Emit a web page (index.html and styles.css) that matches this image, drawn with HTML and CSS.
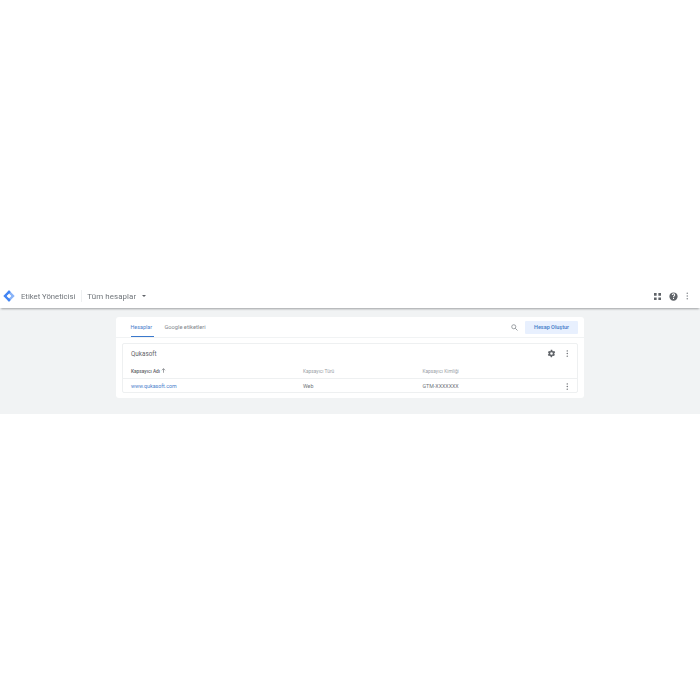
FILE: index.html
```html
<!DOCTYPE html>
<html lang="tr">
<head>
<meta charset="utf-8">
<title>Etiket Yöneticisi</title>
<link rel="stylesheet" href="styles.css">
</head>
<body>
<div class="page">
  <header class="topbar">
    <svg class="logo" viewBox="0 0 24 24" width="12" height="12"><path fill="#8ab4f8" d="M12 .6 23.4 12 12 23.4 8.6 20l8-8-8-8z"/><path fill="#4285f4" d="M12 .6 .6 12 12 23.4 15.4 20l-8-8 8-8z"/><circle cx="12" cy="12" r="3.2" fill="#fff"/></svg>
    <span class="product">Etiket Yöneticisi</span>
    <span class="divider"></span>
    <span class="crumb">Tüm hesaplar</span>
    <span class="caret"></span>
    <span class="spring"></span>
    <svg class="apps" viewBox="0 0 8 8" width="7" height="7"><path fill="#5f6368" d="M0 0h3v3H0zM5 0h3v3H5zM0 5h3v3H0zM5 5h3v3H5z"/></svg>
    <svg class="help" viewBox="0 0 24 24" width="9" height="9"><path fill="#5f6368" fill-rule="evenodd" d="M12 1a11 11 0 1 0 0 22 11 11 0 0 0 0-22zm-1.400 17.500v-2.800h2.800v2.800zm4.600-7.600c-.9.900-1.800 1.400-1.800 3.100h-2.800c0-2.600 1.300-3.300 2.300-4.300.6-.6.900-1.100.9-1.700a1.800 1.800 0 0 0-3.600 0H7.400a4.600 4.600 0 0 1 9.200 0c0 1.200-.6 2.100-1.400 2.900z"/></svg>
    <svg class="more" viewBox="0 0 4 12" width="2.500" height="8"><circle cx="2" cy="1.500" r="1.200" fill="#80868b"/><circle cx="2" cy="6" r="1.200" fill="#80868b"/><circle cx="2" cy="10.500" r="1.200" fill="#80868b"/></svg>
  </header>
  <main class="content">
    <section class="panel">
      <div class="tabs">
        <div class="tab tab-active">Hesaplar</div>
        <div class="tab">Google etiketleri</div>
        <span class="spring"></span>
        <svg class="search" viewBox="0 0 24 24" width="7" height="7"><circle cx="9.500" cy="9.500" r="7" fill="none" stroke="#80868b" stroke-width="2.600"/><path d="m14.800 14.800 7.400 7.400" stroke="#80868b" stroke-width="2.800"/></svg>
        <div class="cta">Hesap Oluştur</div>
      </div>
      <div class="account">
        <div class="account-head">
          <span class="account-name">Qukasoft</span>
          <span class="spring"></span>
          <svg class="gear" viewBox="0 0 24 24" width="9" height="9"><path fill="#5f6368" fill-rule="evenodd" d="M19.400 13c.1-.3.100-.7.100-1s0-.7-.1-1l2.100-1.600c.2-.2.200-.4.100-.6l-2-3.500c-.1-.2-.4-.3-.6-.2l-2.500 1c-.5-.4-1.100-.7-1.700-1L14 2.400c0-.2-.2-.4-.5-.4h-3c-.3 0-.5.200-.5.400l-.4 2.700c-.6.200-1.200.6-1.700 1l-2.500-1c-.2-.1-.5 0-.6.200l-2 3.500c-.1.200-.1.400.1.600L4.600 11c-.1.300-.1.700-.1 1s0 .7.100 1l-2.100 1.600c-.2.200-.2.400-.1.600l2 3.500c.1.200.4.300.6.200l2.500-1c.5.400 1.100.7 1.700 1l.4 2.700c0 .2.200.4.500.4h3c.3 0 .5-.2.500-.4l.4-2.700c.6-.2 1.200-.6 1.700-1l2.500 1c.2.100.5 0 .6-.2l2-3.500c.1-.2.100-.4-.1-.6zM12 15.500a3.500 3.500 0 1 1 0-7 3.500 3.500 0 0 1 0 7z"/></svg>
          <svg class="more row-more" viewBox="0 0 4 12" width="2.500" height="7"><circle cx="2" cy="1.500" r="1.200" fill="#5f6368"/><circle cx="2" cy="6" r="1.200" fill="#5f6368"/><circle cx="2" cy="10.500" r="1.200" fill="#5f6368"/></svg>
        </div>
        <div class="row row-head">
          <span class="cell cell-name sorted">Kapsayıcı Adı <svg viewBox="0 0 10 10" width="5" height="5"><path d="M5 9.500V1.500M1.800 4.500 5 1.200l3.200 3.300" fill="none" stroke="#5f6368" stroke-width="1.200"/></svg></span>
          <span class="cell cell-type">Kapsayıcı Türü</span>
          <span class="cell cell-id">Kapsayıcı Kimliği</span>
        </div>
        <div class="row row-body">
          <span class="cell cell-name link">www.qukasoft.com</span>
          <span class="cell cell-type">Web</span>
          <span class="cell cell-id">GTM-XXXXXXX</span>
          <span class="spring"></span>
          <svg class="more row-more" viewBox="0 0 4 12" width="2.500" height="7"><circle cx="2" cy="1.500" r="1.200" fill="#5f6368"/><circle cx="2" cy="6" r="1.200" fill="#5f6368"/><circle cx="2" cy="10.500" r="1.200" fill="#5f6368"/></svg>
        </div>
      </div>
    </section>
  </main>
</div>
</body>
</html>
```
FILE: styles.css
```css
* { box-sizing: border-box; }
html, body { margin: 0; background: #fff; }
body { font-family: Roboto, "Liberation Sans", sans-serif; color: #3c4043; }
.page { padding-top: 284px; filter: blur(.5px); }
.spring { flex: 1; }
.topbar {
  position: relative;
  height: 24px;
  display: flex;
  align-items: center;
  padding: 0 11.500px 0 3px;
  background: #fff;
  box-shadow: 0 2px 2px -1px rgba(60, 64, 67, .45);
}
.logo { margin-right: 6px; }
.product { font-size: 7.700px; color: #70757a; }
.divider { width: 1px; height: 12px; background: #eef0f1; margin: 0 5.500px; }
.crumb { font-size: 7.900px; color: #70757a; letter-spacing: .1px; }
.caret {
  width: 0; height: 0;
  margin-left: 6px;
  border-left: 2px solid transparent;
  border-right: 2px solid transparent;
  border-top: 2px solid #5f6368;
}
.apps { margin-right: 8.500px; }
.help { margin-right: 8px; }
.content { height: 106px; padding-top: 9px; background: #f1f3f4; }
.panel {
  width: 468px;
  height: 81px;
  margin-left: 116px;
  padding-bottom: 5px;
  background: #fff;
  border-radius: 3px;
}
.tabs {
  height: 21px;
  display: flex;
  align-items: center;
  padding: 0 6px 0 14.500px;
  border-bottom: 1px solid #f1f3f4;
}
.tab { height: 20px; line-height: 21px; font-size: 5.700px; color: #80868b; margin-right: 12px; }
.tab-active { color: #4a80cc; border-bottom: 1px solid #3a78cc; width: 23px; white-space: nowrap; margin-right: 11px; font-size: 5.400px; }
.search { margin-right: 7px; }
.cta {
  width: 53px;
  height: 13px;
  line-height: 13px;
  text-align: center;
  font-size: 5.500px;
  font-weight: 500;
  color: #3f7cc8;
  background: #e8f0fe;
  border-radius: 1px;
}
.account {
  width: 456px;
  height: 50px;
  margin: 5px 0 0 6px;
  border: 1px solid #eef0f1;
  border-radius: 2px;
}
.account-head {
  height: 18px;
  display: flex;
  align-items: center;
  padding: 1px 9px 0 8px;
}
.account-name { font-size: 6.300px; color: #5f6368; }
.gear { margin-right: 10px; }
.row-more { display: block; }
.row { display: flex; align-items: center; padding: 0 9px 0 8px; font-size: 5.300px; }
.row-head { height: 17px; border-bottom: 1px solid #eef0f1; padding-top: 2px; color: #9aa0a6; font-size: 4.800px; }
.row-body { height: 14px; color: #70757a; }
.cell-name { width: 172px; }
.cell-type { width: 119.500px; }
.sorted { color: #5f6368; font-weight: 500; }
.link { color: #4a80cc; }
```
